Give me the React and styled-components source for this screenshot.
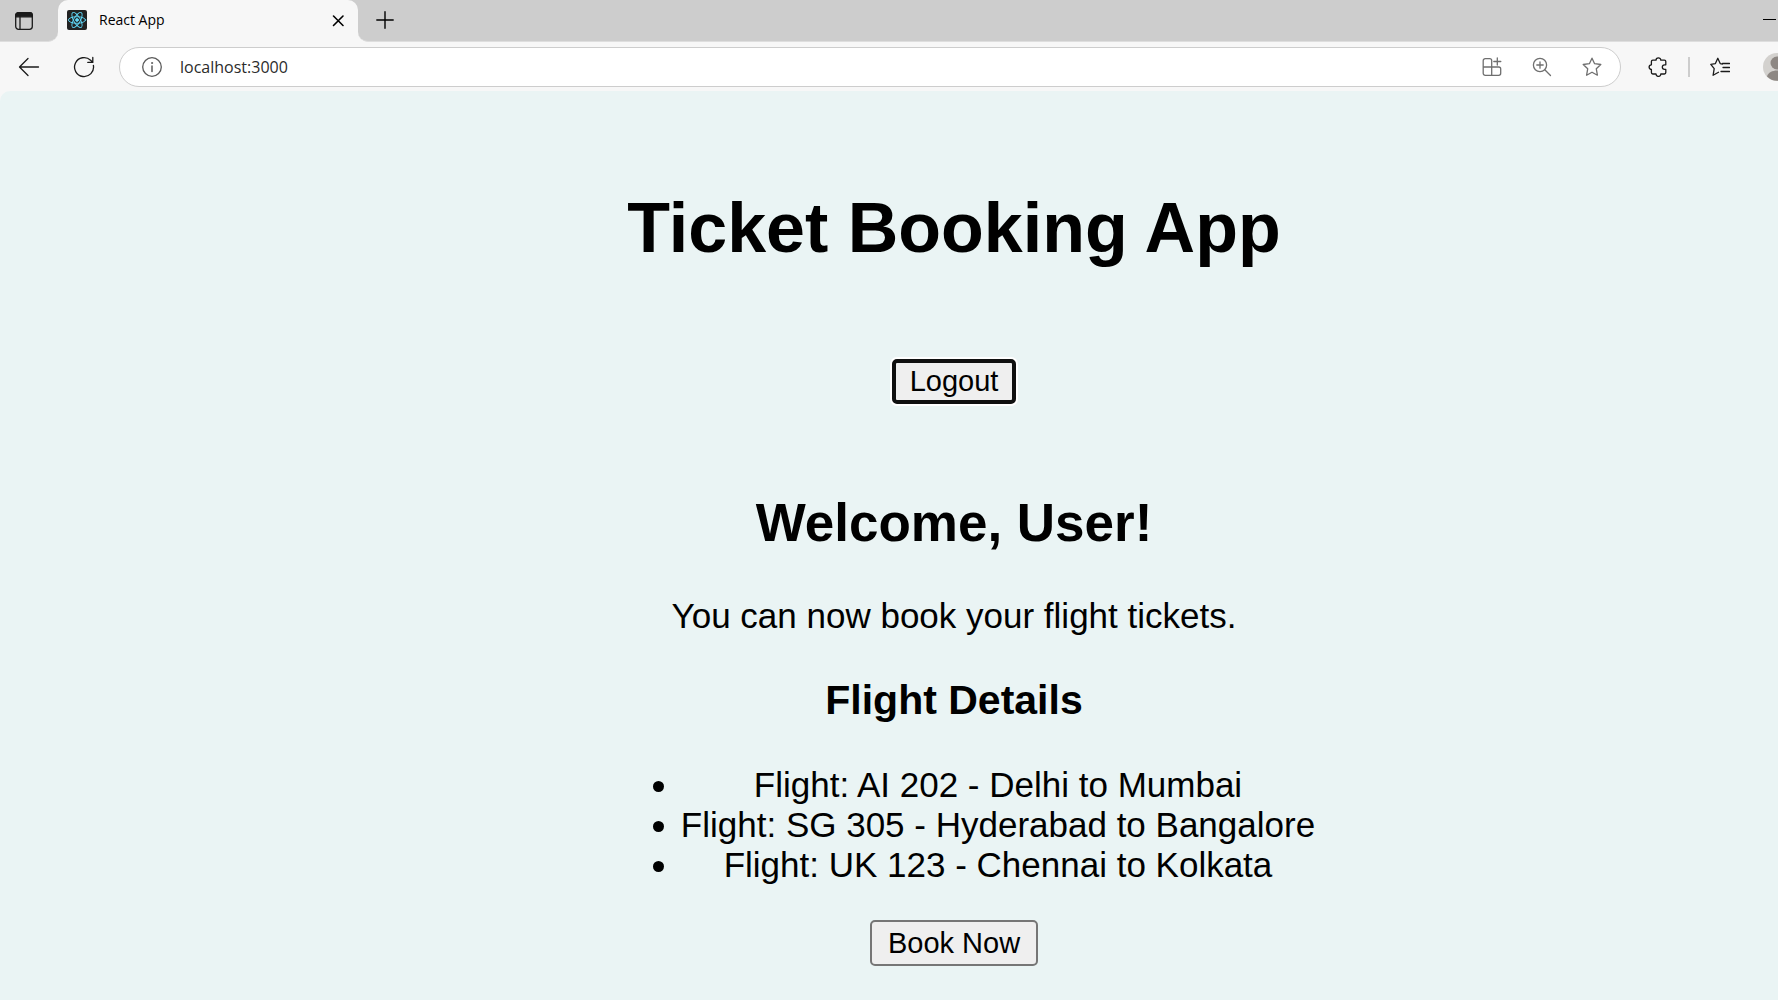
import React from "react";
import styled, { createGlobalStyle } from "styled-components";

const GlobalStyle = createGlobalStyle`
  * { box-sizing: border-box; }
  html, body, #root { height: 100%; margin: 0; }
  body {
    overflow: hidden;
    background: #eaf4f4;
    color: #000;
    font-family: "Liberation Sans", Arial, sans-serif;
  }
`;

const uiFont = `"Open Sans", "Noto Sans", sans-serif`;

const Browser = styled.div`
  min-height: 100%;
  display: flex;
  flex-direction: column;
  background: #f7f7f7;
  overflow: hidden;
`;

const TabStrip = styled.header`
  height: 42px;
  display: flex;
  background: #f7f7f7;
`;

const IconButton = styled.button`
  flex: none;
  display: flex;
  align-items: center;
  justify-content: center;
  width: ${(p) => p.$width || 20}px;
  height: 20px;
  padding: 0;
  border: 0;
  background: transparent;
  color: ${(p) => p.$color || "#1b1b1b"};
`;

const StripStart = styled.div`
  width: 58px;
  padding-right: 10px;
  display: flex;
  align-items: center;
  justify-content: center;
  background: #cdcdcd;
  border-bottom: 1px solid #dedede;
  border-bottom-right-radius: 10px;
`;

const TabHolder = styled.div`
  width: 300px;
  background: #cdcdcd;
`;

const Tab = styled.div`
  height: 100%;
  padding: 0 10px 2px 9px;
  display: flex;
  align-items: center;
  gap: 12px;
  background: #f7f7f7;
  border-radius: 10px 10px 0 0;
`;

const TabTitle = styled.span`
  flex: 1;
  font: 14px/20px ${uiFont};
`;

const StripRest = styled.div`
  flex: 1;
  padding: 0 2px 2px 17px;
  display: flex;
  align-items: center;
  justify-content: space-between;
  background: #cdcdcd;
  border-bottom: 1px solid #dedede;
  border-bottom-left-radius: 10px;
`;

const Toolbar = styled.nav`
  height: 49px;
  padding: 5px 0 4px 18px;
  display: flex;
  align-items: center;
`;

const NavButtons = styled.div`
  width: 101px;
  display: flex;
  gap: 33px;
`;

const AddressBar = styled.form`
  flex: 1;
  height: 40px;
  padding: 0 18px 0 22px;
  display: flex;
  align-items: center;
  gap: 30px;
  background: #fff;
  border: 1px solid #cdcdcd;
  border-radius: 20px;
`;

const AddressField = styled.label`
  flex: 1;
  display: flex;
  align-items: center;
  gap: 18px;
  color: #5a5a5a;
`;

const AddressInput = styled.input`
  flex: 1;
  height: 24px;
  padding: 0;
  border: 0;
  outline: 0;
  background: transparent;
  color: #2b2b2b;
  font: 16px/24px ${uiFont};
`;

const Tools = styled.div`
  padding-left: 27px;
  display: flex;
  align-items: center;
  gap: 20px;
`;

const Separator = styled.span`
  width: 2px;
  height: 20px;
  background: #cdcdcd;
`;

const Profile = styled.button`
  width: 28px;
  height: 28px;
  padding: 0 0 0 13px;
  border: 0;
  background: transparent;
  overflow: hidden;
`;

const Page = styled.main`
  flex: 1;
  padding: 97px 0 34px 130px;
  display: flex;
  flex-direction: column;
  align-items: center;
  background: #eaf4f4;
  border-top-left-radius: 10px;
`;

const Title = styled.h1`
  margin: 0 0 91px;
  font-size: 70px;
  line-height: 80px;
`;

const Welcome = styled.h2`
  margin: 89px 0 43px;
  font-size: 53px;
  line-height: 60px;
`;

const Message = styled.p`
  margin: 0;
  font-size: 35px;
  line-height: 40px;
`;

const Subtitle = styled.h3`
  margin: 41px 0 42px;
  font-size: 41px;
  line-height: 46px;
`;

const FlightList = styled.ul`
  margin: 0 0 35px;
  padding-left: 88px;
  font-size: 35px;
  line-height: 40px;
  text-align: center;
`;

const ActionButton = styled.button`
  height: 46px;
  padding: 0 16px 1px;
  border: 2px solid #767676;
  border-radius: 5px;
  background: #efefef;
  color: #000;
  font: 29px/34px "Liberation Sans", Arial, sans-serif;
`;

const FocusedButton = styled(ActionButton)`
  height: 45px;
  padding: 0 14px 1px;
  border: 4px solid #101010;
  box-shadow: 0 0 0 2px #fff;
`;

const Svg = ({ size = 20, children, ...rest }) => (
  <svg
    width={size}
    height={size}
    viewBox={`0 0 ${size} ${size}`}
    fill="none"
    stroke="currentColor"
    strokeWidth="1.3"
    strokeLinecap="round"
    strokeLinejoin="round"
    aria-hidden="true"
    {...rest}
  >
    {children}
  </svg>
);

const starPath =
  "M10 1.2 12.6 6.7 18.8 7.5 14.3 11.8 15.4 18.2 10 15.2 4.6 18.2 5.7 11.8 1.2 7.5 7.4 6.7Z";

const flights = [
  "Flight: AI 202 - Delhi to Mumbai",
  "Flight: SG 305 - Hyderabad to Bangalore",
  "Flight: UK 123 - Chennai to Kolkata",
];

export default function App() {
  return (
    <>
      <GlobalStyle />
      <Browser>
        <TabStrip>
          <StripStart>
            <IconButton aria-label="Tab actions">
              <Svg>
                <rect x="1.7" y="1.7" width="16.6" height="16.6" rx="2.8" />
                <path d="M1.7 5.8V4.5a2.8 2.8 0 0 1 2.8-2.8h11a2.8 2.8 0 0 1 2.8 2.8v1.3Z" fill="currentColor" />
                <path d="M6 5v13" />
              </Svg>
            </IconButton>
          </StripStart>
          <TabHolder>
            <Tab>
              <Svg stroke="#61dafb" strokeWidth="0.9">
                <rect width="20" height="20" rx="2" fill="#222" stroke="none" />
                <ellipse cx="10" cy="10" rx="8.6" ry="3.3" />
                <ellipse cx="10" cy="10" rx="8.6" ry="3.3" transform="rotate(60 10 10)" />
                <ellipse cx="10" cy="10" rx="8.6" ry="3.3" transform="rotate(120 10 10)" />
                <circle cx="10" cy="10" r="1.4" fill="#61dafb" />
              </Svg>
              <TabTitle>React App</TabTitle>
              <IconButton aria-label="Close tab" $color="#000">
                <Svg strokeWidth="1.6">
                  <path d="m5.5 6 9.5 9.5M15 6l-9.5 9.5" />
                </Svg>
              </IconButton>
            </Tab>
          </TabHolder>
          <StripRest>
            <IconButton aria-label="New tab" $color="#000">
              <Svg strokeWidth="1.4">
                <path d="M10 1.8v16.4M1.8 10h16.4" />
              </Svg>
            </IconButton>
            <IconButton aria-label="Minimize" $width={13} $color="#000">
              <Svg size={13}>
                <path d="M0 6.5h13" strokeWidth="1" strokeLinecap="butt" />
              </Svg>
            </IconButton>
          </StripRest>
        </TabStrip>

        <Toolbar>
          <NavButtons>
            <IconButton aria-label="Back" $width={22}>
              <Svg size={22}>
                <path d="M20.5 11H1.8M10 2.5 1.5 11l8.5 8.5" />
              </Svg>
            </IconButton>
            <IconButton aria-label="Refresh" $width={22}>
              <Svg size={22}>
                <path d="M20.4 9.4A9.5 9.5 0 1 1 17.6 4.2L19.8 6.4M19.8 1.4v5h-5" />
              </Svg>
            </IconButton>
          </NavButtons>
          <AddressBar>
            <AddressField>
              <Svg size={20}>
                <circle cx="10" cy="10" r="9.3" />
                <path d="M10 9v5.5" strokeWidth="1.5" />
                <circle cx="10" cy="6" r="0.6" fill="currentColor" strokeWidth="0.8" />
              </Svg>
              <AddressInput aria-label="Address" defaultValue="localhost:3000" />
            </AddressField>
            <IconButton type="button" aria-label="App available" $color="#6f6f6f">
              <Svg>
                <path d="M9.7 18.3H3.2a2 2 0 0 1-2-2V3.7a2 2 0 0 1 2-2h4.5a2 2 0 0 1 2 2ZM1.2 10h15.5a2 2 0 0 1 2 2v4.3a2 2 0 0 1-2 2h-7M15.3 1v7M11.8 4.5h7" />
              </Svg>
            </IconButton>
            <IconButton type="button" aria-label="Zoom" $color="#6f6f6f">
              <Svg>
                <circle cx="8" cy="8" r="6.6" />
                <path d="m12.8 12.8 5.7 5.7M8 4.8v6.4M4.8 8h6.4" />
              </Svg>
            </IconButton>
            <IconButton type="button" aria-label="Add to favorites" $color="#6f6f6f">
              <Svg>
                <path d={starPath} />
              </Svg>
            </IconButton>
          </AddressBar>
          <Tools>
            <IconButton aria-label="Extensions">
              <Svg>
                <path d="M4.8 3.2H8a2.4 2.4 0 0 1 4.8 0H16.4a1.4 1.4 0 0 1 1.4 1.4V7.8H16.6a2.3 2.3 0 0 0 0 4.6H17.8V15.6A1.4 1.4 0 0 1 16.4 17H12.8a2.4 2.4 0 0 1-4.8 0H4.8a1.4 1.4 0 0 1-1.4-1.4V12.4a2.3 2.3 0 0 1 0-4.6V4.6A1.4 1.4 0 0 1 4.8 3.2Z" />
              </Svg>
            </IconButton>
            <Separator />
            <IconButton aria-label="Favorites">
              <Svg>
                <path d="M12.5 7 10.2 6.6 7.8 1.3 5.4 6.6 0.8 7.4 4.2 11.6 3.1 18.3 8.5 15.3M12.5 6.5h7M13 10.5h6.5M11 14.5h8.5" />
              </Svg>
            </IconButton>
            <Profile aria-label="Profile">
              <Svg size={28} stroke="none">
                <circle cx="14" cy="14" r="14" fill="#d3d1ce" />
                <circle cx="14" cy="10" r="6.5" fill="#8d8783" />
                <path d="M4 23.5c2-8 18-8 20 0a14 14 0 0 1-20 0Z" fill="#8d8783" />
              </Svg>
            </Profile>
          </Tools>
        </Toolbar>

        <Page>
          <Title>Ticket Booking App</Title>
          <FocusedButton>Logout</FocusedButton>
          <Welcome>Welcome, User!</Welcome>
          <Message>You can now book your flight tickets.</Message>
          <Subtitle>Flight Details</Subtitle>
          <FlightList>
            {flights.map((flight) => (
              <li key={flight}>{flight}</li>
            ))}
          </FlightList>
          <ActionButton>Book Now</ActionButton>
        </Page>
      </Browser>
    </>
  );
}
